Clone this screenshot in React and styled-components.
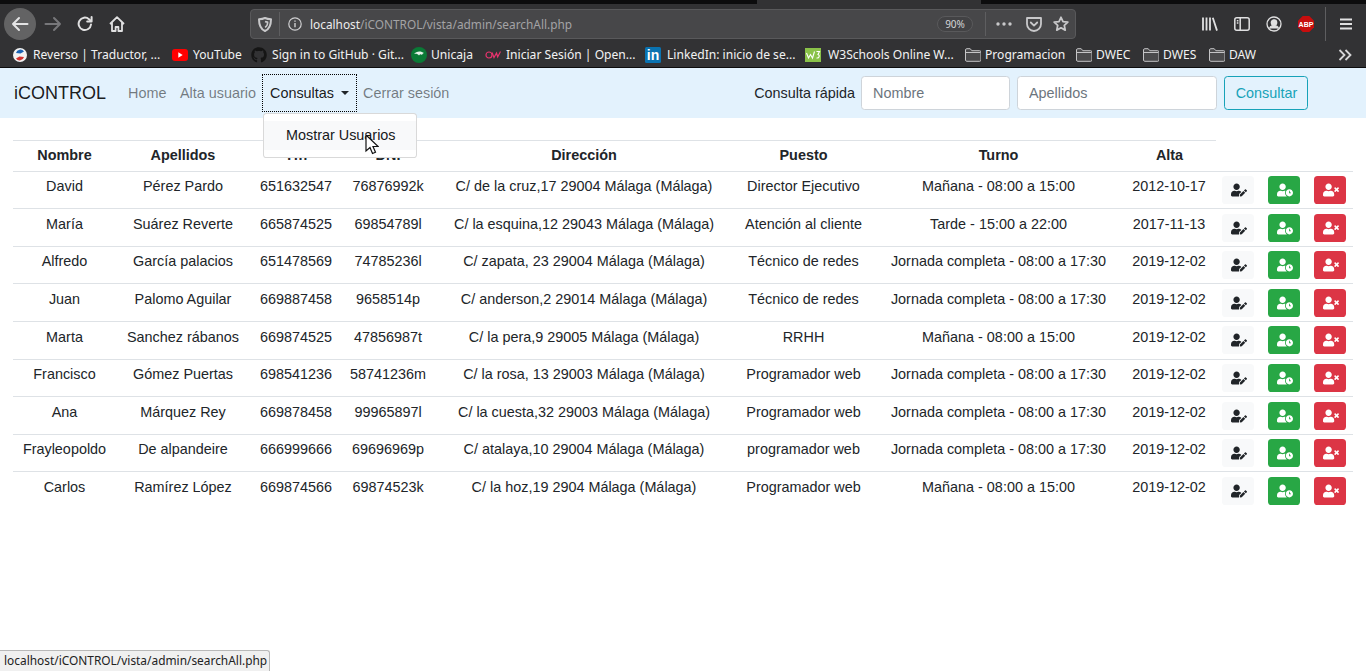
import React from 'react'
import styled, { createGlobalStyle } from 'styled-components'
import { FaUserEdit, FaUserClock, FaUserTimes, FaGithub } from 'react-icons/fa'

const GlobalStyle = createGlobalStyle`
  html, body { margin: 0; padding: 0; background: #fff; }
  body { font-family: "Liberation Sans", Arial, sans-serif; color: #212529; }
  * { box-sizing: border-box; }
`

const Page = styled.div`
  position: relative;
  width: 1366px;
  height: 671px;
  overflow: hidden;
`

/* browser chrome */
const Chrome = styled.div`
  height: 68px;
  background: #323234;
  font-family: "Noto Sans", sans-serif;
  color: #f2f2f3;
  border-bottom: 1px solid #0c0c0d;
`
const TabStrip = styled.div`
  display: flex;
  height: 4px;
  background: #0c0c0d;
`
const TabGap = styled.div`
  width: 224px;
  margin-left: 757px;
  background: #323234;
`
const Toolbar = styled.div`
  display: flex;
  align-items: center;
  height: 38px;
  padding: 2px 0 0 4px;
`
const BackButton = styled.div`
  display: flex;
  align-items: center;
  justify-content: center;
  flex: none;
  width: 32px;
  height: 32px;
  border-radius: 50%;
  background: #636364;
`
const ToolIcon = styled.div`
  display: flex;
  align-items: center;
  justify-content: center;
  flex: none;
  width: ${p => p.$w || 32}px;
  height: 32px;
`
const ForwardIcon = styled(ToolIcon)`
  margin-left: 1px;
`
const UrlBar = styled.div`
  display: flex;
  align-items: center;
  flex: none;
  width: 826px;
  height: 30px;
  margin: 0 118px 0 117px;
  padding-left: 3px;
  background: #474749;
  border: 1px solid #59595b;
  border-radius: 4px;
  font-size: 11.85px;
`
const Divider = styled.div`
  flex: none;
  width: 1px;
  height: ${p => p.$h || 24}px;
  margin-left: ${p => p.$ml || 0}px;
  background: #5e5e60;
`
const UrlText = styled.div`
  flex: 1;
  color: #a3a3a5;
  white-space: nowrap;
  b { font-weight: 400; color: #ededee; }
`
const ZoomPill = styled.div`
  display: flex;
  align-items: center;
  justify-content: center;
  width: 36px;
  height: 16px;
  margin-right: 12px;
  border: 1px solid #59595b;
  border-radius: 8px;
  background: #424244;
  color: #d5d5d7;
  font-size: 10px;
`
const RightTools = styled.div`
  display: flex;
  align-items: center;
  flex: none;
`
const Bookmarks = styled.div`
  display: flex;
  align-items: center;
  height: 25px;
  padding-left: 12px;
  font-size: 12.1px;
`
const Bookmark = styled.div`
  display: flex;
  align-items: center;
  flex: none;
  width: ${p => p.$w}px;
  gap: ${p => p.$gap || 6}px;
  white-space: nowrap;
`
const BookmarkIcon = styled.div`
  display: flex;
  align-items: center;
  justify-content: center;
  flex: none;
  width: 16px;
  height: 16px;
`
const MoreBookmarks = styled.div`
  margin-left: 108px;
  display: flex;
`

/* navbar */
const Navbar = styled.nav`
  display: flex;
  align-items: center;
  height: 50px;
  padding: 0 58px 0 14px;
  background: #e3f2fd;
  font-size: 14.4px;
`
const Brand = styled.div`
  width: 114px;
  font-size: 18px;
  color: rgba(0, 0, 0, 0.9);
`
const NavLink = styled.div`
  flex: none;
  width: ${p => p.$w}px;
  color: rgba(0, 0, 0, 0.5);
`
const DropdownToggle = styled.div`
  display: flex;
  align-items: center;
  flex: none;
  width: 95px;
  height: 38px;
  margin-right: 6px;
  padding-left: 7px;
  border: 1px dotted #000;
  color: rgba(0, 0, 0, 0.9);
`
const Caret = styled.span`
  width: 0;
  height: 0;
  margin-left: 7px;
  border-top: 4px solid #212529;
  border-left: 4.5px solid transparent;
  border-right: 4.5px solid transparent;
`
const SearchForm = styled.form`
  display: flex;
  align-items: center;
  margin-left: auto;
`
const SearchLabel = styled.span`
  margin-right: 6px;
  color: #212529;
`
const SearchInput = styled.input`
  width: ${p => p.$w}px;
  height: 34px;
  margin-right: 7px;
  padding: 0 11px;
  background: #fff;
  border: 1px solid #ced4da;
  border-radius: 3.6px;
  font: inherit;
  &::placeholder { color: #6c757d; opacity: 1; }
`
const SearchButton = styled.button`
  width: 84px;
  height: 34px;
  padding: 0 0 0 1px;
  background: transparent;
  border: 1px solid #17a2b8;
  border-radius: 3.6px;
  color: #17a2b8;
  font: inherit;
`

/* dropdown menu over the table */
const Menu = styled.div`
  position: absolute;
  top: 113px;
  left: 263px;
  width: 154px;
  height: 45px;
  padding-top: 7px;
  background: #fff;
  border: 1px solid rgba(0, 0, 0, 0.15);
  border-radius: 3.6px;
  font-size: 14.4px;
  z-index: 2;
`
const MenuItem = styled.div`
  height: 29px;
  padding: 6px 0 0 22px;
  background: #f8f9fa;
  color: #16181b;
`
const Cursor = styled.svg`
  position: absolute;
  top: 134px;
  left: 365px;
  z-index: 3;
`
const StatusPanel = styled.div`
  position: absolute;
  left: 0;
  bottom: 0;
  width: 270px;
  height: 21px;
  padding: 1px 0 0 4px;
  background: #f0f0f0;
  border: 1px solid #b8b8b8;
  border-left: 0;
  border-bottom: 0;
  border-top-right-radius: 3px;
  font-family: "Noto Sans", sans-serif;
  font-size: 11.9px;
  color: #222;
  white-space: nowrap;
`

/* table */
const Content = styled.main`
  padding: 21.6px 13px 0;
`
const Table = styled.table`
  width: 1340px;
  table-layout: fixed;
  border-collapse: collapse;
  font-size: 14.4px;
  color: #212529;
`
const Th = styled.th`
  height: 31px;
  padding: 0 0 2px;
  border-top: 1px solid #dee2e6;
  text-align: center;
  font-weight: 700;
  white-space: nowrap;
  &:nth-child(8) { padding-right: 1px; }
`
const Td = styled.td`
  height: 37.6px;
  padding: 6.6px 0 0;
  border-top: 1px solid #dee2e6;
  text-align: center;
  vertical-align: top;
  white-space: nowrap;
  &:nth-child(8) { padding-right: 2px; }
`
const ActionCell = styled(Td)`
  padding: 4.4px 0 0 6px;
  text-align: left;
`
const ActionButton = styled.button`
  display: flex;
  align-items: center;
  justify-content: center;
  width: 32px;
  height: 28px;
  padding: 0 0 0 1px;
  border: 0;
  border-radius: 3.6px;
  color: ${p => (p.$kind === 'light' ? '#212529' : '#fff')};
  background: ${p =>
    p.$kind === 'light' ? '#f8f9fa' : p.$kind === 'success' ? '#28a745' : '#dc3545'};
  svg { width: 16px; height: 16px; }
`

const columns = [103, 134, 92, 92, 300, 139, 251, 92, 46, 46, 45]
const headers = ['Nombre', 'Apellidos', 'Tfn', 'DNI', 'Dirección', 'Puesto', 'Turno', 'Alta']

const mañana = 'Mañana - 08:00 a 15:00'
const completa = 'Jornada completa - 08:00 a 17:30'
const users = [
  ['David', 'Pérez Pardo', '651632547', '76876992k', 'C/ de la cruz,17 29004 Málaga (Málaga)', 'Director Ejecutivo', mañana, '2012-10-17'],
  ['María', 'Suárez Reverte', '665874525', '69854789l', 'C/ la esquina,12 29043 Málaga (Málaga)', 'Atención al cliente', 'Tarde - 15:00 a 22:00', '2017-11-13'],
  ['Alfredo', 'García palacios', '651478569', '74785236l', 'C/ zapata, 23 29004 Málaga (Málaga)', 'Técnico de redes', completa, '2019-12-02'],
  ['Juan', 'Palomo Aguilar', '669887458', '9658514p', 'C/ anderson,2 29014 Málaga (Málaga)', 'Técnico de redes', completa, '2019-12-02'],
  ['Marta', 'Sanchez rábanos', '669874525', '47856987t', 'C/ la pera,9 29005 Málaga (Málaga)', 'RRHH', mañana, '2019-12-02'],
  ['Francisco', 'Gómez Puertas', '698541236', '58741236m', 'C/ la rosa, 13 29003 Málaga (Málaga)', 'Programador web', completa, '2019-12-02'],
  ['Ana', 'Márquez Rey', '669878458', '99965897l', 'C/ la cuesta,32 29003 Málaga (Málaga)', 'Programador web', completa, '2019-12-02'],
  ['Frayleopoldo', 'De alpandeire', '666999666', '69696969p', 'C/ atalaya,10 29004 Málaga (Málaga)', 'programador web', completa, '2019-12-02'],
  ['Carlos', 'Ramírez López', '669874566', '69874523k', 'C/ la hoz,19 2904 Málaga (Málaga)', 'Programador web', mañana, '2019-12-02'],
]

const Folder = () => (
  <svg width="16" height="14" viewBox="0 0 16 14" fill="none" stroke="#c4c4c6" strokeWidth="1">
    <path d="M.5 12V2c0-.8.5-1.3 1.3-1.3h3.4l1.6 2h7.9c.8 0 1.3.5 1.3 1.3v8c0 .8-.5 1.3-1.3 1.3H1.8C1 13.3.5 12.8.5 12z" fill="#4a4a4c" />
    <path d="M.5 4.5h15" />
  </svg>
)

const BrowserChrome = () => (
  <Chrome>
    <TabStrip>
      <TabGap />
    </TabStrip>
    <Toolbar>
      <BackButton>
        <svg width="18" height="16" viewBox="0 0 18 16" fill="none" stroke="#e4e4e5" strokeWidth="2" strokeLinecap="round" strokeLinejoin="round">
          <path d="M16.5 8H2M8 2 2 8l6 6" />
        </svg>
      </BackButton>
      <ForwardIcon>
        <svg width="18" height="16" viewBox="0 0 18 16" fill="none" stroke="#77777a" strokeWidth="2" strokeLinecap="round" strokeLinejoin="round">
          <path d="M1.5 8H16M10 2l6 6-6 6" />
        </svg>
      </ForwardIcon>
      <ToolIcon>
        <svg width="16" height="16" viewBox="0 0 16 16" fill="none" stroke="#e0e0e1" strokeWidth="2" strokeLinecap="round" strokeLinejoin="round">
          <path d="M14 8.5A6.2 6.2 0 1 1 12 3.2l2 1.8" />
          <path d="M14.6 1v4.4h-4.4" />
        </svg>
      </ToolIcon>
      <ToolIcon>
        <svg width="16" height="16" viewBox="0 0 16 16" fill="none" stroke="#e0e0e1" strokeWidth="1.8" strokeLinejoin="round">
          <path d="M1 8 8 1.2 15 8M3 6.5V15h3.6v-4h2.8v4H13V6.5" />
        </svg>
      </ToolIcon>
      <UrlBar>
        <ToolIcon $w={22}>
          <svg width="14" height="15" viewBox="0 0 14 15" fill="none" stroke="#c8c8ca" strokeWidth="2" strokeLinejoin="round">
            <path d="M7 1c2 1 3.6 1.2 6 1.2 0 5.5-1.5 9.8-6 11.800C2.5 12 1 7.7 1 2.2 3.4 2.2 5 2 7 1z" />
            <path d="M7 4.5c.8.4 1.5.5 2.7.5 0 2.5-.7 4.4-2.7 5.4" strokeWidth="1.5" />
          </svg>
        </ToolIcon>
        <Divider $ml={3} />
        <ToolIcon $w={30}>
          <svg width="14" height="14" viewBox="0 0 14 14" fill="none" stroke="#cfcfd1" strokeWidth="1.2">
            <circle cx="7" cy="7" r="6.2" />
            <path d="M7 6v4.2M7 3.5v1.3" strokeWidth="1.4" />
          </svg>
        </ToolIcon>
        <UrlText>
          <b>localhost</b>/iCONTROL/vista/admin/searchAll.php
        </UrlText>
        <ZoomPill>90%</ZoomPill>
        <Divider />
        <ToolIcon $w={36}>
          <svg width="16" height="4" viewBox="0 0 16 4" fill="#c8c8ca">
            <circle cx="2" cy="2" r="1.7" />
            <circle cx="8" cy="2" r="1.7" />
            <circle cx="14" cy="2" r="1.7" />
          </svg>
        </ToolIcon>
        <ToolIcon $w={24}>
          <svg width="16" height="15" viewBox="0 0 16 15" fill="none" stroke="#c8c8ca" strokeWidth="1.8" strokeLinecap="round" strokeLinejoin="round">
            <path d="M1 1h14v6c0 3.8-3.2 7-7 7s-7-3.2-7-7z" />
            <path d="M4.8 5.5 8 8.6l3.2-3.1" />
          </svg>
        </ToolIcon>
        <ToolIcon $w={29}>
          <svg width="16" height="16" viewBox="0 0 16 16" fill="none" stroke="#c8c8ca" strokeWidth="1.8" strokeLinejoin="round">
            <path d="m8 1.3 2 4.3 4.8.6-3.5 3.2.9 4.7L8 11.8l-4.2 2.3.9-4.7L1.2 6.2 6 5.6z" />
          </svg>
        </ToolIcon>
      </UrlBar>
      <RightTools>
        <ToolIcon>
          <svg width="16" height="14" viewBox="0 0 16 14" fill="none" stroke="#e0e0e1" strokeWidth="1.8">
            <path d="M1 .5v13M4.5.5v13M8 .5v13M10.8.8l4.2 12.8" />
          </svg>
        </ToolIcon>
        <ToolIcon $w={31}>
          <svg width="16" height="14" viewBox="0 0 16 14" fill="none" stroke="#e0e0e1" strokeWidth="1.5">
            <rect x=".8" y=".8" width="14.4" height="12.4" rx="2" />
            <path d="M6.2 1v12M2.8 3.8h1.6M2.8 6h1.6" />
          </svg>
        </ToolIcon>
        <ToolIcon $w={33}>
          <svg width="16" height="16" viewBox="0 0 16 16" fill="none" stroke="#e0e0e1" strokeWidth="1.3">
            <circle cx="8" cy="8" r="7" />
            <circle cx="8" cy="6.5" r="2.7" fill="#e0e0e1" />
            <path d="M3.5 12.5c.8-2.2 2.6-2.8 4.5-2.8s3.7.6 4.5 2.8" fill="#e0e0e1" />
          </svg>
        </ToolIcon>
        <ToolIcon>
          <svg width="16" height="16" viewBox="0 0 16 16">
            <path d="M4.7 0h6.6L16 4.7v6.6L11.3 16H4.7L0 11.3V4.7z" fill="#c70d0d" />
            <text x="8" y="10.5" textAnchor="middle" fill="#fff" fontSize="7" fontWeight="700" fontFamily="Liberation Sans">ABP</text>
          </svg>
        </ToolIcon>
        <Divider $h={34} $ml={3} />
        <ToolIcon $w={39}>
          <svg width="12" height="12" viewBox="0 0 12 12" stroke="#e0e0e1" strokeWidth="1.8">
            <path d="M0 1.5h12M0 6h12M0 10.5h12" />
          </svg>
        </ToolIcon>
      </RightTools>
    </Toolbar>
    <Bookmarks>
      <Bookmark $w={160} $gap={5}>
        <BookmarkIcon>
          <svg width="14" height="14" viewBox="0 0 14 14">
            <circle cx="7" cy="7" r="7" fill="#f2f2f2" />
            <path d="M3 5a4.5 4.5 0 0 1 8-1.500L7.500 5.500z" fill="#1a63b5" />
            <path d="M11 9a4.5 4.5 0 0 1-8 1.500l3.500-2z" fill="#d3322f" />
          </svg>
        </BookmarkIcon>
        Reverso | Traductor, ...
      </Bookmark>
      <Bookmark $w={79} $gap={5}>
        <BookmarkIcon>
          <svg width="16" height="12" viewBox="0 0 16 12">
            <rect width="16" height="12" rx="3" fill="#f00" />
            <path d="m6.3 3.3 4.4 2.7-4.4 2.7z" fill="#fff" />
          </svg>
        </BookmarkIcon>
        YouTube
      </Bookmark>
      <Bookmark $w={160} $gap={5}>
        <BookmarkIcon>
          <FaGithub size={16} color="#151515" />
        </BookmarkIcon>
        Sign in to GitHub · Git...
      </Bookmark>
      <Bookmark $w={74} $gap={4}>
        <BookmarkIcon>
          <svg width="16" height="16" viewBox="0 0 16 16">
            <circle cx="8" cy="8" r="8" fill="#0a7a36" />
            <path d="M3 7c2-3 7-3.5 10-1-1 .3-1.6 1-2 2-1-1.2-2-1-3 .5C7 7 5 6.5 3 7z" fill="#e6f2ea" />
          </svg>
        </BookmarkIcon>
        Unicaja
      </Bookmark>
      <Bookmark $w={160} $gap={5}>
        <BookmarkIcon>
          <svg width="16" height="10" viewBox="0 0 16 10" fill="none" stroke="#e8336e" strokeWidth="1.2">
            <circle cx="4" cy="5" r="3" />
            <path d="m7 2.5 2 5 2.5-4.500 1.200 4L15.500 1.500" />
          </svg>
        </BookmarkIcon>
        Iniciar Sesión | Open...
      </Bookmark>
      <Bookmark $w={160} $gap={6}>
        <BookmarkIcon>
          <svg width="16" height="16" viewBox="0 0 16 16">
            <rect width="16" height="16" rx="1.5" fill="#0a73b1" />
            <text x="8" y="13" textAnchor="middle" fill="#fff" fontSize="14" fontWeight="700" fontFamily="Liberation Sans">in</text>
          </svg>
        </BookmarkIcon>
        LinkedIn: inicio de se...
      </Bookmark>
      <Bookmark $w={160} $gap={7}>
        <BookmarkIcon>
          <svg width="16" height="14" viewBox="0 0 16 14">
            <rect width="16" height="14" fill="#8ac249" />
            <path d="M1.5 5 3.5 10l2-3.5 2 3.500 2-6.500M11.500 3.500h3l-1.500 3c2 .5 1.500 4-1.500 3.500" fill="none" stroke="#fff" strokeWidth="1.1" />
          </svg>
        </BookmarkIcon>
        W3Schools Online W...
      </Bookmark>
      <Bookmark $w={111} $gap={4}>
        <BookmarkIcon><Folder /></BookmarkIcon>
        Programacion
      </Bookmark>
      <Bookmark $w={67} $gap={4}>
        <BookmarkIcon><Folder /></BookmarkIcon>
        DWEC
      </Bookmark>
      <Bookmark $w={66} $gap={4}>
        <BookmarkIcon><Folder /></BookmarkIcon>
        DWES
      </Bookmark>
      <Bookmark $w={21} $gap={4}>
        <BookmarkIcon><Folder /></BookmarkIcon>
        DAW
      </Bookmark>
      <MoreBookmarks>
        <svg width="14" height="12" viewBox="0 0 14 12" fill="none" stroke="#d6d6d8" strokeWidth="1.8">
          <path d="m1.5 1 5 5-5 5M7.5 1l5 5-5 5" />
        </svg>
      </MoreBookmarks>
    </Bookmarks>
  </Chrome>
)

const App = () => (
  <Page>
    <GlobalStyle />
    <BrowserChrome />
    <Navbar>
      <Brand>iCONTROL</Brand>
      <NavLink $w={52}>Home</NavLink>
      <NavLink $w={82}>Alta usuario</NavLink>
      <DropdownToggle>
        Consultas
        <Caret />
      </DropdownToggle>
      <NavLink $w={90}>Cerrar sesión</NavLink>
      <SearchForm>
        <SearchLabel>Consulta rápida</SearchLabel>
        <SearchInput $w={149} placeholder="Nombre" />
        <SearchInput $w={200} placeholder="Apellidos" />
        <SearchButton type="button">Consultar</SearchButton>
      </SearchForm>
    </Navbar>
    <Menu>
      <MenuItem>Mostrar Usuarios</MenuItem>
    </Menu>
    <Cursor width="14" height="22" viewBox="0 0 14 22">
      <path d="M1 1v16l4-3.5 2.5 6 3-1.3-2.5-5.7h5.2z" fill="#fff" stroke="#111" strokeWidth="1.2" />
    </Cursor>
    <Content>
      <Table>
        <colgroup>
          {columns.map((w, i) => (
            <col key={i} style={{ width: w }} />
          ))}
        </colgroup>
        <thead>
          <tr>
            {headers.map(h => (
              <Th key={h}>{h}</Th>
            ))}
          </tr>
        </thead>
        <tbody>
          {users.map(user => (
            <tr key={user[0]}>
              {user.map((value, i) => (
                <Td key={i}>{value}</Td>
              ))}
              <ActionCell>
                <ActionButton $kind="light"><FaUserEdit /></ActionButton>
              </ActionCell>
              <ActionCell>
                <ActionButton $kind="success"><FaUserClock /></ActionButton>
              </ActionCell>
              <ActionCell>
                <ActionButton $kind="danger"><FaUserTimes /></ActionButton>
              </ActionCell>
            </tr>
          ))}
        </tbody>
      </Table>
    </Content>
    <StatusPanel>localhost/iCONTROL/vista/admin/searchAll.php</StatusPanel>
  </Page>
)

export default App
